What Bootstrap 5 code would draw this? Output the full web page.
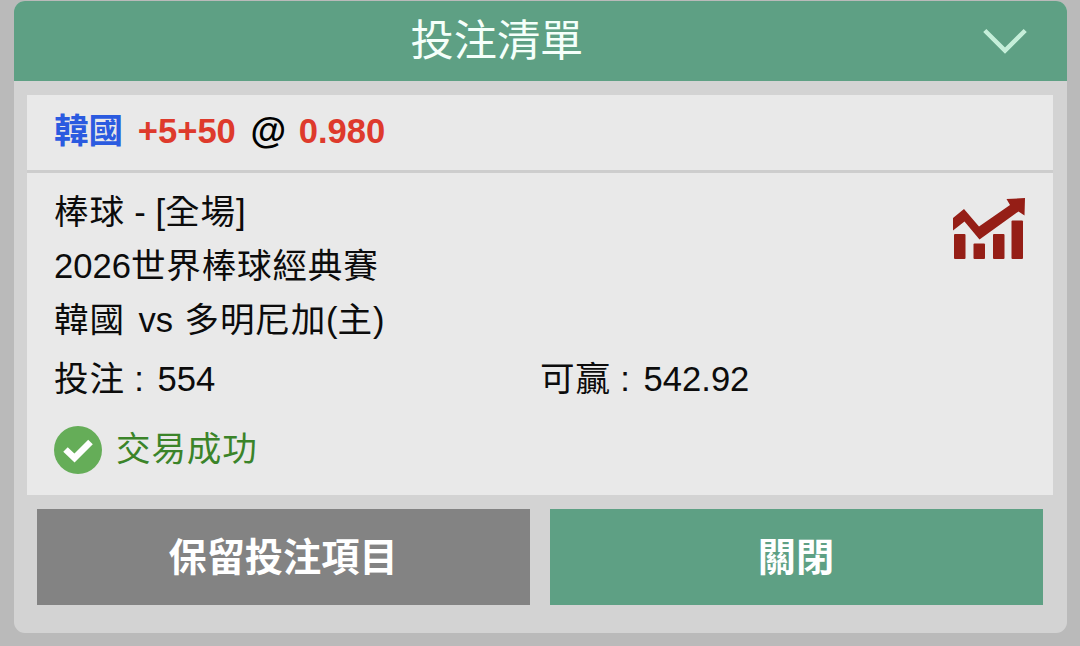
<!DOCTYPE html>
<html lang="zh-Hant">
<head>
    <meta charset="UTF-8">
    <meta name="viewport" content="width=device-width, initial-scale=1.0">
    <title>投注清單</title>
    <link href="https://cdn.jsdelivr.net/npm/bootstrap@5.3.3/dist/css/bootstrap.min.css" rel="stylesheet">
    <style>
        body {
            background-color: #bababa;
            font-family: "Liberation Sans", "Noto Sans CJK TC", sans-serif;
            font-size: 34.6px;
            color: #0c0c0c;
            height: 646px;
            overflow: hidden;
        }
        .slip {
            margin: 1px 13.5px 0 13.5px;
            height: 631.5px;
            border-radius: 11px;
            background-color: #d3d3d3;
        }
        .slip-header {
            height: 80.4px;
            padding: 0 40px 0 397px;
            background-color: #5ea084;
            color: #f4fffa;
            font-size: 43.2px;
            line-height: 80px;
        }
        .slip-body {
            padding: 13.6px 13.5px 0 13.5px;
        }
        .bet {
            height: 400px;
            background-color: #e9e9e9;
        }
        .bet-head {
            height: 78px;
            padding: 0 27px;
            border-bottom: 3px solid #cdcdcd;
            line-height: 73px;
        }
        .bet-info {
            padding: 12px 27px 0 27px;
            line-height: 54px;
        }
        .zh { letter-spacing: .8px; }
        .team { color: #2b5be0; margin-right: 5px; }
        .odds { color: #de3a2c; }
        .at {
            color: #000;
            font-size: 36.5px;
            line-height: 1;
            margin: 0 3px 0 5px;
        }
        .vs { margin: 0 2px 0 4px; }
        .num { margin-left: 4px; }
        .stats-icon { margin: 13px 0 0 0; }
        .money { line-height: 64px; }
        .status {
            height: 78px;
            color: #3b8429;
            gap: 14px;
        }
        .status .zh { padding-bottom: 2px; }
        .actions {
            padding: 14px 10px 0 10px;
            gap: 20px;
        }
        .btn-slip {
            height: 96.5px;
            padding: 2px 13px 0 12px;
            color: #fff;
            font-size: 38.2px;
            font-weight: 700;
            line-height: 1;
        }
        .btn-keep, .btn-keep:hover { background-color: #838383; color: #fff; }
        .btn-shut, .btn-shut:hover { background-color: #5ea084; color: #fff; }
    </style>
</head>
<body>
    <div class="slip overflow-hidden">
        <div class="slip-header d-flex justify-content-between align-items-center">
            <span>投注清單</span>
            <svg width="44" height="28" viewBox="0 0 44 28" fill="none" stroke="#c5eed9" stroke-width="4.5">
                <path d="M1.8 3.5 22 23.5 42.2 3.5"/>
            </svg>
        </div>

        <div class="slip-body">
            <div class="bet">
                <div class="bet-head fw-bold">
                    <span class="team">韓國</span>
                    <span class="odds">+5+50</span>
                    <span class="at">@</span>
                    <span class="odds">0.980</span>
                </div>
                <div class="bet-info">
                    <div class="d-flex justify-content-between align-items-start">
                        <div>
                            <div><span class="zh">棒球</span> - [<span class="zh">全場</span>]</div>
                            <div>2026<span class="zh">世界棒球經典賽</span></div>
                            <div><span class="zh">韓國</span> <span class="vs">vs</span> <span class="zh">多明尼加</span>(<span class="zh">主</span>)</div>
                        </div>
                        <!-- statistics -->
                        <svg class="stats-icon" width="73" height="62" viewBox="0 0 73 62" fill="#951e16">
                            <path d="M0 20 11 11 26 28.5 57 7 53.500 1 72 0 71.500 17.500 65.500 13.5 26.5 41.5 11.5 23.5 0 32.5Z"/>
                            <rect x="1" y="36" width="11.5" height="25" rx="1"/>
                            <rect x="20.5" y="45.5" width="11.5" height="15.5" rx="1"/>
                            <rect x="40" y="36" width="11.5" height="25" rx="1"/>
                            <rect x="58.5" y="22.5" width="11.5" height="38.5" rx="1"/>
                        </svg>
                    </div>
                    <div class="row g-0 money">
                        <div class="col-6"><span class="zh">投注</span> : <span class="num">554</span></div>
                        <div class="col-6"><span class="zh">可贏</span> : <span class="num">542.92</span></div>
                    </div>
                    <div class="status d-flex align-items-center">
                        <svg width="48" height="48" viewBox="0 0 48 48">
                            <circle cx="24" cy="24" r="24" fill="#65ad58"/>
                            <path d="M11.5 23.5 20.5 32 36.5 16" fill="none" stroke="#fff" stroke-width="6.5"/>
                        </svg>
                        <span class="zh">交易成功</span>
                    </div>
                </div>
            </div>

            <div class="actions d-flex">
                <button type="button" class="btn btn-slip btn-keep flex-fill w-50 border-0 rounded-0">保留投注項目</button>
                <button type="button" class="btn btn-slip btn-shut flex-fill w-50 border-0 rounded-0">關閉</button>
            </div>
        </div>
    </div>
    <script src="https://cdn.jsdelivr.net/npm/bootstrap@5.3.3/dist/js/bootstrap.bundle.min.js"></script>
</body>
</html>
